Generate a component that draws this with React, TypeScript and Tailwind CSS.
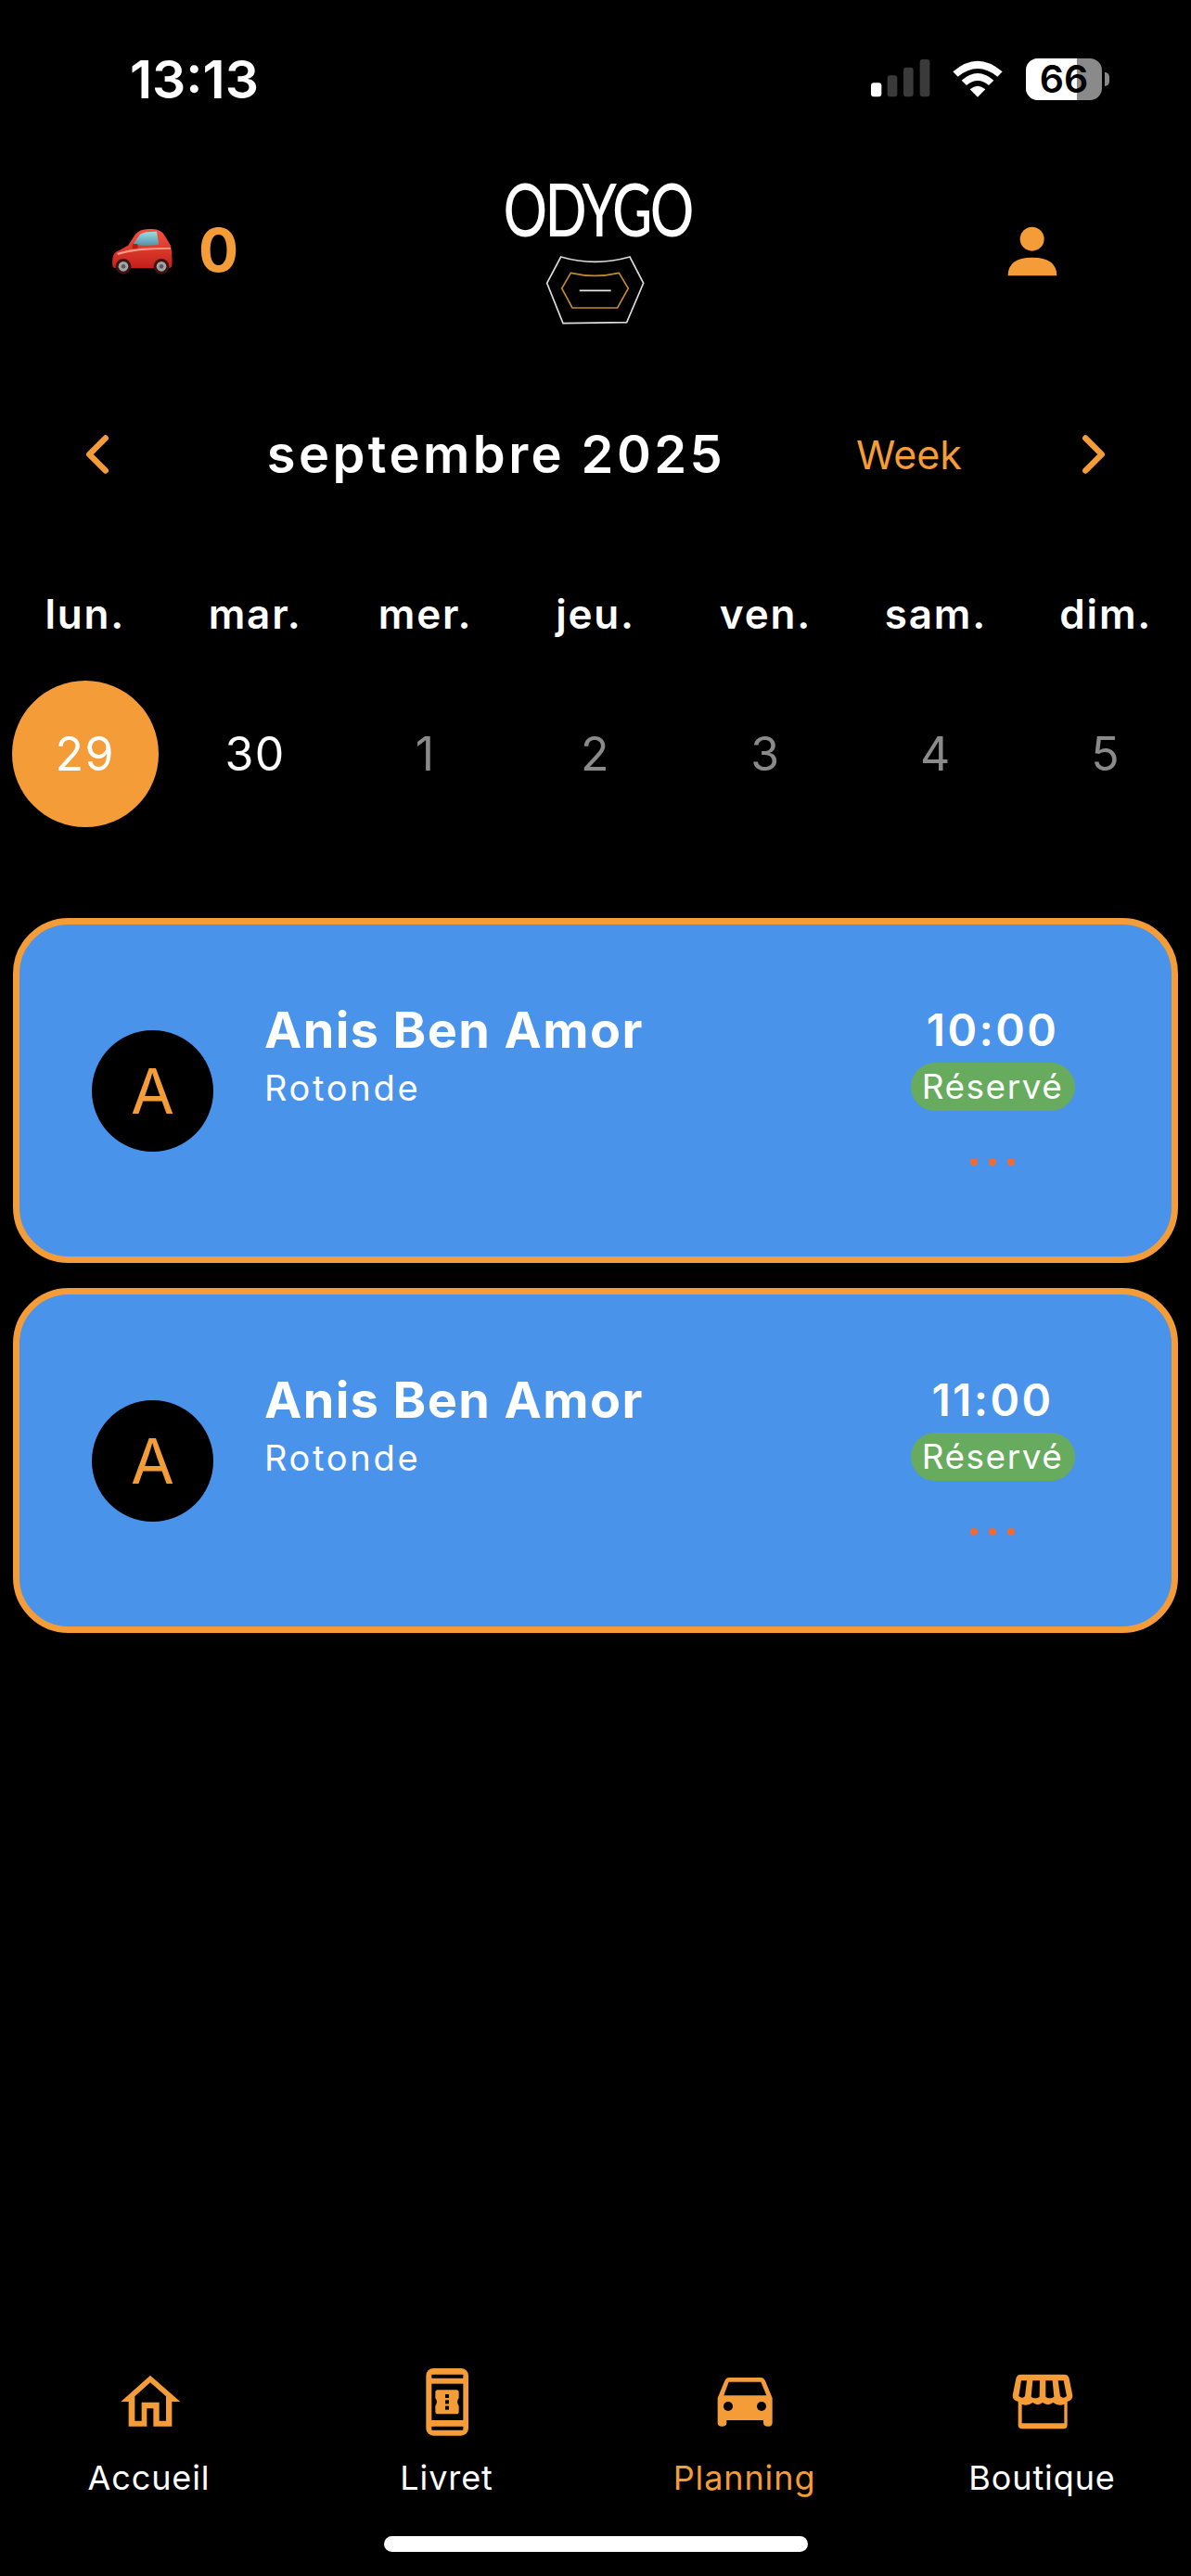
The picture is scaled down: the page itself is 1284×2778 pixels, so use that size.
import { ChevronLeft, ChevronRight } from "lucide-react";

const days = [
  { label: "lun.", num: "29", active: true },
  { label: "mar.", num: "30", white: true },
  { label: "mer.", num: "1" },
  { label: "jeu.", num: "2" },
  { label: "ven.", num: "3" },
  { label: "sam.", num: "4" },
  { label: "dim.", num: "5" },
];

function StatusBar() {
  return (
    <div className="h-[170px] flex items-center justify-between pl-[140px] pr-[88px]">
      <span className="text-[57px] font-semibold text-white leading-none">13:13</span>
      <div className="flex items-center">
        <svg width="64" height="42" viewBox="0 0 192 126" className="mr-[23px]">
          <rect x="0" y="76" width="34" height="45" rx="9" fill="#fff" />
          <rect x="53" y="52" width="32" height="69" rx="9" fill="#3a3a3a" />
          <rect x="105" y="26" width="32" height="95" rx="9" fill="#3a3a3a" />
          <rect x="158" y="0" width="32" height="121" rx="9" fill="#3a3a3a" />
        </svg>
        <svg width="56" height="42" viewBox="0 0 168 126" className="mr-[24px]">
          <path d="M4 40 Q84 -30 164 40 L148 56 Q84 4 20 56 Z" fill="#fff" />
          <path d="M32 68 Q84 22 136 68 L120 84 Q84 54 48 84 Z" fill="#fff" />
          <path d="M59 97 Q84 76 109 97 L84 122 Z" fill="#fff" />
        </svg>
        <div className="relative w-[82px] h-[45px] rounded-[13px] bg-[#8a8a8a] flex items-center justify-center">
          <div className="absolute left-0 top-0 bottom-0 w-[55px] rounded-l-[13px] bg-white" />
          <span className="relative text-[41px] font-semibold text-black leading-none">66</span>
        </div>
        <div className="w-[5px] h-[15px] ml-[3px] rounded-r-full bg-[#8a8a8a]" />
      </div>
    </div>
  );
}

function CarEmoji() {
  return (
    <svg width="66" height="54" viewBox="58 70 198 162">
      <defs>
        <linearGradient id="carBody" x1="0" y1="0" x2="0" y2="1">
          <stop offset="0" stopColor="#f5543f" />
          <stop offset="1" stopColor="#c4201a" />
        </linearGradient>
        <linearGradient id="carGlass" x1="0" y1="0" x2="0" y2="1">
          <stop offset="0" stopColor="#a4dbe6" />
          <stop offset="1" stopColor="#4e93a8" />
        </linearGradient>
      </defs>
      <path d="M62 200 Q58 165 75 155 Q100 142 112 135 L135 100 Q150 80 185 82 Q220 80 232 105 L250 135 Q256 160 254 200 Q254 208 245 208 H70 Q62 208 62 200 Z" fill="url(#carBody)" />
      <path d="M128 133 L150 100 Q158 90 205 90 L212 133 Q170 138 128 133 Z" fill="url(#carGlass)" />
      <path d="M76 160 Q130 140 250 142 L250 147 Q140 146 80 166 Z" fill="#ff9a88" />
      <rect x="126" y="130" width="18" height="16" rx="4" fill="#b81c16" />
      <circle cx="97" cy="203" r="25" fill="#3a1512" />
      <circle cx="97" cy="203" r="16" fill="#a4a4a6" />
      <circle cx="97" cy="203" r="7" fill="#5a5a5c" />
      <circle cx="220" cy="203" r="25" fill="#3a1512" />
      <circle cx="220" cy="203" r="16" fill="#a4a4a6" />
      <circle cx="220" cy="203" r="7" fill="#5a5a5c" />
    </svg>
  );
}

function Logo() {
  return (
    <div className="flex flex-col items-center mt-[2px]">
      <span className="text-[80px] text-white font-medium leading-[64px] tracking-[-3px] scale-x-[0.735] font-['Lato',sans-serif] translate-x-[2px]">ODYGO</span>
      <svg width="108" height="76" viewBox="265 312 324 228" className="mt-[19px]" fill="none">
        <path d="M315 318 Q425 350 538 318 L582 403 L528 530 L322 533 L270 403 Z" stroke="#dcdcdc" strokeWidth="5" />
        <path d="M347 370 Q425 388 503 370 L533 420 L498 483 L352 483 L318 420 Z" stroke="#c08a2c" strokeWidth="5" />
        <path d="M375 427 H477" stroke="#e6e6e6" strokeWidth="5" />
      </svg>
    </div>
  );
}

function Header() {
  return (
    <div className="h-[200px] flex items-center justify-between pl-[120px] pr-[120px]">
      <div className="flex items-center gap-[28px] w-[140px]">
        <CarEmoji />
        <span className="text-[64px] font-bold text-[#f39c38] leading-none">0</span>
      </div>
      <Logo />
      <div className="w-[140px] flex justify-end">
        <svg width="100" height="90" viewBox="0 0 300 270" className="mr-[4px] -mt-[8px]">
          <circle cx="158" cy="110" r="39" fill="#f39c38" />
          <path d="M80 229 Q80 170 158 170 Q238 170 238 229 Z" fill="#f39c38" />
        </svg>
      </div>
    </div>
  );
}

function MonthRow() {
  return (
    <div className="h-[240px] grid grid-cols-[210px_650px_240px_158px] items-center">
      <div className="flex justify-center">
        <ChevronLeft size={70} strokeWidth={2.2} color="#f39c38" />
      </div>
      <div className="text-center text-[56px] font-semibold text-white tracking-[3.4px]">septembre 2025</div>
      <div className="text-center text-[43px] text-[#f39c38]">Week</div>
      <div className="flex justify-center">
        <ChevronRight size={70} strokeWidth={2.2} color="#f39c38" />
      </div>
    </div>
  );
}

function Days() {
  return (
    <div>
      <div className="grid grid-cols-7 h-[104px] items-center">
        {days.map((d) => (
          <div key={d.label} className="text-center text-[44px] font-semibold text-white tracking-[1.8px]">{d.label}</div>
        ))}
      </div>
      <div className="grid grid-cols-7 mt-[20px] h-[158px] items-center">
        {days.map((d) => (
          <div key={d.label} className="flex justify-center">
            <div
              className={`w-[158px] h-[158px] rounded-full flex items-center justify-center text-[50px] tracking-[1.5px] ${
                d.active ? "bg-[#f39c38] text-white" : d.white ? "text-white" : "text-[#8a8a8a]"
              }`}
            >
              {d.num}
            </div>
          </div>
        ))}
      </div>
    </div>
  );
}

function Booking({ time }: { time: string }) {
  return (
    <div className="h-[372px] rounded-[60px] border-[7px] border-[#f39c38] bg-[#4a93ea] flex items-center pl-[78px]">
      <div className="w-[131px] h-[131px] rounded-full bg-black flex items-center justify-center text-[68px] text-[#f39c38] shrink-0">A</div>
      <div className="self-start pt-[82px] ml-[55px] flex-1">
        <div className="text-[54px] leading-[64px] font-bold text-white tracking-[1.4px]">Anis Ben Amor</div>
        <div className="mt-[8px] text-[38px] leading-[44px] text-white tracking-[2.7px]">Rotonde</div>
      </div>
      <div className="self-start pt-[82px] w-[200px] mr-[93px] flex flex-col items-center">
        <div className="text-[48px] leading-[64px] font-semibold text-white tracking-[2.4px]">{time}</div>
        <div className="mt-[3px] w-[177px] h-[52px] rounded-full bg-[#67ab5e] flex items-center justify-center text-[37px] text-white tracking-[1.5px]">Réservé</div>
        <div className="mt-[51px] flex gap-[12px]">
          <span className="w-[8px] h-[8px] rounded-full bg-[#ef6a35]" />
          <span className="w-[8px] h-[8px] rounded-full bg-[#ef6a35]" />
          <span className="w-[8px] h-[8px] rounded-full bg-[#ef6a35]" />
        </div>
      </div>
    </div>
  );
}

function HomeIcon() {
  return (
    <svg width="120" height="90" viewBox="0 0 360 270">
      <path
        fillRule="evenodd"
        fill="#f39c38"
        d="M183 65 L280 150 H253 V230 H193 V172 H172 V230 H113 V150 H88 Z M183 88 L133 133 V212 H155 V152 H212 V212 H234 V133 Z"
      />
    </svg>
  );
}

function BookletIcon() {
  return (
    <svg width="120" height="90" viewBox="8 30 360 270">
      <rect x="120" y="72" width="137" height="218" rx="24" fill="#f39c38" />
      <rect x="138" y="92" width="102" height="12" rx="2" fill="#000" />
      <rect x="138" y="122" width="102" height="118" fill="#000" />
      <rect x="138" y="260" width="102" height="12" rx="2" fill="#000" />
      <path d="M158 142 H218 Q226 142 226 150 V168 Q216 181 226 194 V212 Q226 220 218 220 H158 Q150 220 150 212 V194 Q160 181 150 168 V150 Q150 142 158 142 Z" fill="#f39c38" />
      <rect x="182" y="156" width="12" height="12" fill="#000" />
      <rect x="182" y="175" width="12" height="12" fill="#000" />
      <rect x="182" y="194" width="12" height="12" fill="#000" />
    </svg>
  );
}

function CarIcon() {
  return (
    <svg width="120" height="90" viewBox="-24 0 360 270">
      <path
        fillRule="evenodd"
        fill="#f39c38"
        d="M105 72 H207 Q218 72 223 85 L245 138 V218 Q245 230 232 230 Q216 230 216 218 V210 H97 V218 Q97 230 82 230 Q68 230 68 218 V138 L90 85 Q95 72 105 72 Z M104 86 L88 130 H226 L208 86 Z"
      />
      <circle cx="102" cy="165" r="15" fill="#000" />
      <circle cx="210" cy="165" r="15" fill="#000" />
    </svg>
  );
}

function ShopIcon() {
  return (
    <svg width="120" height="90" viewBox="-15 0 360 270">
      <path d="M95 62 H235 Q248 62 251 75 L262 130 Q262 146 245 150 V225 Q245 238 232 238 H99 Q86 238 86 225 V150 Q68 146 68 130 L79 75 Q82 62 95 62 Z" fill="#f39c38" />
      <path d="M96 82 H114 L108 132 Q100 142 88 132 Z M133 82 H156 L155 134 Q142 144 128 134 Z M175 82 H197 L202 134 Q188 144 175 134 Z M215 82 H233 L243 132 Q232 142 222 132 Z" fill="#000" />
      <path d="M98 158 Q115 166 133 153 Q150 166 165 153 Q182 166 199 153 Q216 166 235 158 V220 H98 Z" fill="#000" />
    </svg>
  );
}

const tabs = [
  { label: "Accueil", icon: <HomeIcon /> },
  { label: "Livret", icon: <BookletIcon /> },
  { label: "Planning", icon: <CarIcon />, active: true },
  { label: "Boutique", icon: <ShopIcon /> },
];

function TabBar() {
  return (
    <div className="mt-auto">
      <div className="grid grid-cols-4">
        {tabs.map((t) => (
          <div key={t.label} className="flex flex-col items-center">
            {t.icon}
            <div className={`h-[84px] flex items-center text-[36px] tracking-[0.9px] ${t.active ? "text-[#f39c38]" : "text-white"}`}>
              {t.label}
            </div>
          </div>
        ))}
      </div>
      <div className="mt-[21px] mb-[26px] mx-auto w-[457px] h-[17px] rounded-full bg-white" />
    </div>
  );
}

export default function App() {
  return (
    <div className="w-[1284px] h-[2778px] bg-black flex flex-col overflow-hidden font-['Inter',sans-serif]">
      <StatusBar />
      <Header />
      <MonthRow />
      <Days />
      <div className="mt-[98px] px-[14px] flex flex-col gap-[27px]">
        <Booking time="10:00" />
        <Booking time="11:00" />
      </div>
      <TabBar />
    </div>
  );
}
